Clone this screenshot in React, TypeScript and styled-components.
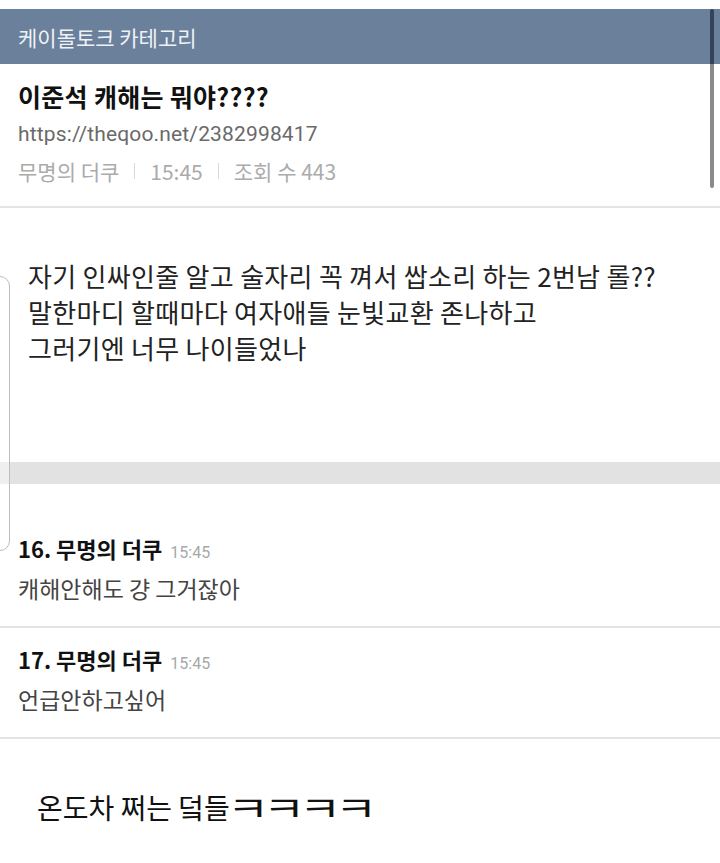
import React from "react";
import styled, { createGlobalStyle } from "styled-components";

const Global = createGlobalStyle`
  html, body { margin: 0; padding: 0; background: #ffffff; }
  body { font-family: "Noto Sans CJK KR", "Noto Sans", sans-serif; }
`;

const Page = styled.div`
  position: relative;
  width: 720px;
  height: 863px;
  overflow: hidden;
  padding-top: 9px;
  box-sizing: border-box;
  background: #fff;
`;

const Header = styled.div`
  height: 55px;
  background: #6b809b;
  color: #eef2f7;
  font-size: 21px;
  display: flex;
  align-items: center;
  padding-left: 18px;
`;

const PostHead = styled.div`
  padding: 13px 18px 17px;
  border-bottom: 2px solid #e4e4e4;
  display: flex;
  flex-direction: column;
`;

const Title = styled.div`
  font-size: 25px;
  font-weight: 700;
  color: #111;
  line-height: 38px;
  letter-spacing: 0.3px;
`;

const Url = styled.div`
  font-family: "Roboto", "Noto Sans", sans-serif;
  font-size: 21px;
  color: #6a6a6a;
  line-height: 38px;
  letter-spacing: 0.15px;
`;

const Meta = styled.div`
  font-size: 21px;
  color: #ababab;
  line-height: 36px;
  display: flex;
  align-items: center;
`;

const Sep = styled.span`
  display: inline-block;
  width: 1px;
  height: 16px;
  background: #d8d8d8;
  margin: 0 15px;
`;

const Scrollbar = styled.div`
  position: absolute;
  left: 710px;
  top: 9px;
  width: 4px;
  height: 179px;
  border-radius: 2px;
  background: linear-gradient(#34435a 0, #34435a 55px, #8a8a8a 55px);
`;

const Body = styled.div`
  height: 254px;
  padding: 50px 0 0 28px;
  box-sizing: border-box;
  font-size: 26px;
  line-height: 36px;
  letter-spacing: 0.3px;
  color: #222;
`;

const Band = styled.div`
  height: 22px;
  background: #e2e2e2;
`;

const EdgeCard = styled.div`
  position: absolute;
  left: -40px;
  top: 276px;
  width: 48px;
  height: 273px;
  border: 1px solid #bdbdbd;
  border-radius: 10px;
  background: rgba(255, 255, 255, 0.45);
`;

const Comment = styled.div<{ $first?: boolean }>`
  padding: ${(p) => (p.$first ? "47px" : "14px")} 18px 20px;
  border-bottom: 2px solid #e4e4e4;
`;

const CommentHead = styled.div`
  display: flex;
  align-items: baseline;
  gap: 8px;
  line-height: 34px;
`;

const Author = styled.span`
  font-size: 22px;
  font-weight: 700;
  color: #111;
`;

const Time = styled.span`
  font-family: "Roboto", "Noto Sans", sans-serif;
  font-size: 16px;
  color: #a8a8a8;
`;

const CommentText = styled.div`
  font-size: 23px;
  color: #444;
  line-height: 36px;
`;

const Footer = styled.div`
  padding: 48px 0 0 37px;
  font-size: 28px;
  color: #111;
  line-height: 40px;
  height: 40px;
  white-space: nowrap;
`;

const Laugh = styled.span`
  display: inline-block;
  font-size: 34px;
  line-height: 40px;
  vertical-align: top;
  letter-spacing: -4.6px;
  margin-left: -3px;
  transform: scaleX(1.35);
  transform-origin: left center;
`;

export default function App() {
  return (
    <>
      <Global />
      <Page>
        <Header>케이돌토크 카테고리</Header>
        <PostHead>
          <Title>이준석 캐해는 뭐야????</Title>
          <Url>https://theqoo.net/2382998417</Url>
          <Meta>
            <span>무명의 더쿠</span>
            <Sep />
            <span>15:45</span>
            <Sep />
            <span>조회 수 443</span>
          </Meta>
        </PostHead>
        <Body>
          자기 인싸인줄 알고 술자리 꼭 껴서 쌉소리 하는 2번남 롤??
          <br />
          말한마디 할때마다 여자애들 눈빛교환 존나하고
          <br />
          그러기엔 너무 나이들었나
        </Body>
        <Band />
        <Comment $first>
          <CommentHead>
            <Author>16. 무명의 더쿠</Author>
            <Time>15:45</Time>
          </CommentHead>
          <CommentText>캐해안해도 걍 그거잖아</CommentText>
        </Comment>
        <Comment>
          <CommentHead>
            <Author>17. 무명의 더쿠</Author>
            <Time>15:45</Time>
          </CommentHead>
          <CommentText>언급안하고싶어</CommentText>
        </Comment>
        <Footer>
          온도차 쩌는 덬들<Laugh>ㅋㅋㅋㅋ</Laugh>
        </Footer>
        <Scrollbar />
        <EdgeCard />
      </Page>
    </>
  );
}
